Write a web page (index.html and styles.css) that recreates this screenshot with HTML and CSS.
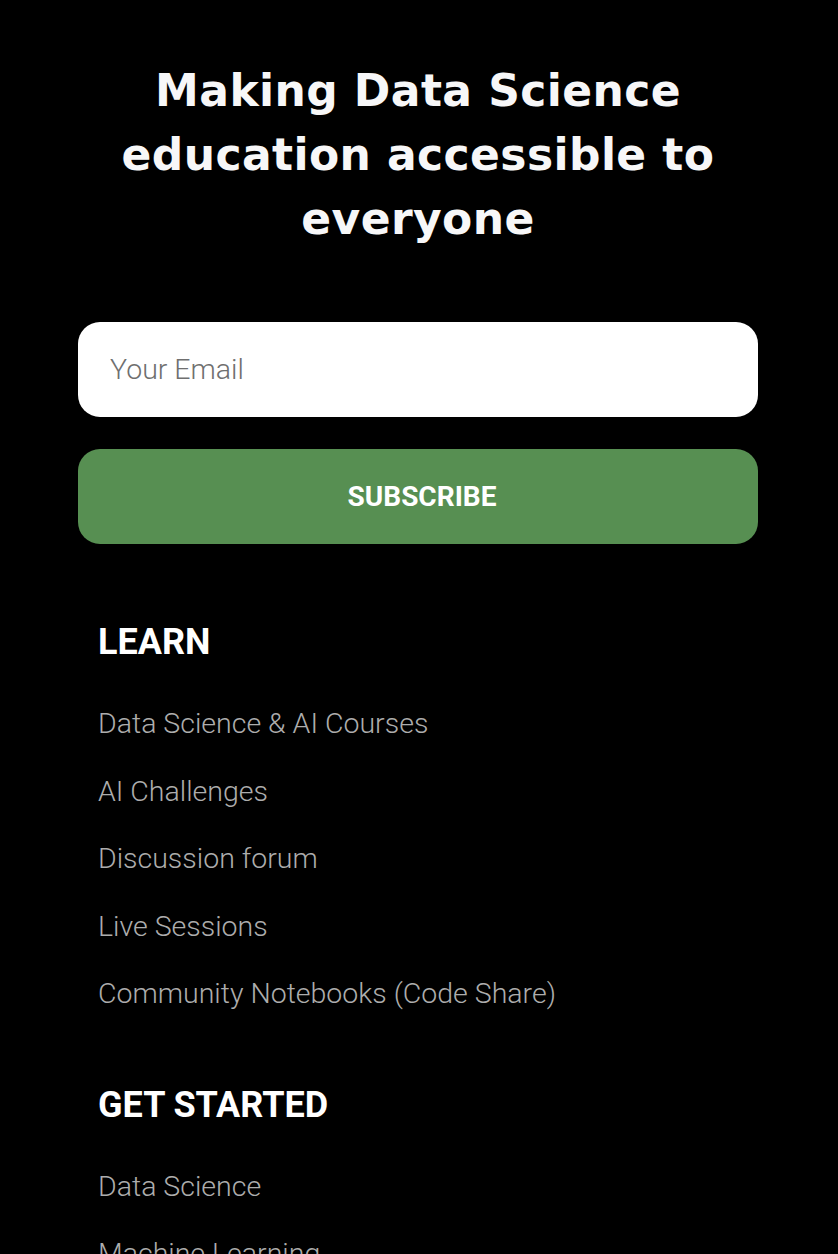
FILE: index.html
```html
<!DOCTYPE html>
<html lang="en">
<head>
<meta charset="utf-8">
<title>Footer</title>
<link rel="stylesheet" href="styles.css">
</head>
<body>
<footer class="footer">
  <h2 class="tagline">Making Data Science education accessible to everyone</h2>
  <form class="subscribe">
    <input class="email" type="email" placeholder="Your Email">
    <button class="btn" type="button">SUBSCRIBE</button>
  </form>
  <nav class="links">
    <section class="group">
      <h3 class="group-title">LEARN</h3>
      <ul class="list">
        <li><a href="#">Data Science &amp; AI Courses</a></li>
        <li><a href="#">AI Challenges</a></li>
        <li><a href="#">Discussion forum</a></li>
        <li><a href="#">Live Sessions</a></li>
        <li><a href="#">Community Notebooks (Code Share)</a></li>
      </ul>
    </section>
    <section class="group">
      <h3 class="group-title">GET STARTED</h3>
      <ul class="list">
        <li><a href="#">Data Science</a></li>
        <li><a href="#">Machine Learning</a></li>
        <li><a href="#">Deep Learning</a></li>
      </ul>
    </section>
  </nav>
</footer>
</body>
</html>
```
FILE: styles.css
```css
html, body {
  margin: 0;
  padding: 0;
  background: #000;
}
body {
  font-family: Roboto, "Liberation Sans", sans-serif;
  color: #fff;
  overflow: hidden;
  height: 1254px;
}
.footer {
  padding: 59px 80px 0 78px;
}
.tagline {
  margin: 0 auto;
  width: 680px;
  font-family: "DejaVu Sans", Inter, sans-serif;
  font-weight: 700;
  font-size: 44px;
  line-height: 64px;
  letter-spacing: 0.4px;
  text-align: center;
  color: #f7f7f8;
}
.subscribe {
  margin-top: 71px;
  display: flex;
  flex-direction: column;
  gap: 32px;
}
.email {
  box-sizing: border-box;
  height: 95px;
  width: 100%;
  border: none;
  border-radius: 22px;
  background: #fff;
  padding: 0 32px;
  font-family: Roboto, sans-serif;
  font-weight: 300;
  font-size: 28.5px;
  color: #333;
  outline: none;
}
.email::placeholder {
  color: #6f6f6f;
}
.btn {
  height: 95px;
  width: 100%;
  border: none;
  border-radius: 22px;
  background: #578f52;
  color: #fff;
  font-family: Roboto, sans-serif;
  font-weight: 700;
  font-size: 28px;
  padding: 0 0 0 8px;
}
.links {
  padding: 78px 20px 0;
}
.group {
  margin-bottom: 45px;
}
.group-title {
  margin: 0 0 40px;
  font-family: Roboto, sans-serif;
  font-weight: 700;
  font-size: 36px;
  line-height: 40px;
  color: #fff;
}
.list {
  list-style: none;
  margin: 0;
  padding: 0;
}
.list li {
  height: 67.5px;
  line-height: 44px;
}
.list a {
  font-family: Roboto, sans-serif;
  font-weight: 300;
  font-size: 28.5px;
  color: #adadad;
  text-decoration: none;
}
```
